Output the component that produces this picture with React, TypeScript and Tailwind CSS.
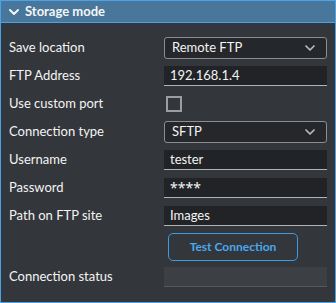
import { ChevronDown } from "lucide-react";

const font = { fontFamily: 'Lato, "Noto Sans", sans-serif' };

function Label({ children }: { children: string }) {
  return <span className="text-[13px] text-[#f4f4f4]">{children}</span>;
}

function Select({ value }: { value: string }) {
  return (
    <div className="flex h-[22px] items-center justify-between rounded-[3px] border border-[#8a8d91] bg-[#25272b] pl-[7px] pr-[8px] text-[13px] text-[#f4f4f4]">
      <span>{value}</span>
      <ChevronDown className="size-4 text-[#b9bcc0]" strokeWidth={2.5} />
    </div>
  );
}

function Input({ value, className = "" }: { value: string; className?: string }) {
  return (
    <div
      className={`flex h-[20px] items-center border-b border-[#b0b3b7] bg-[#212327] pl-[6px] text-[13px] text-[#f4f4f4] ${className}`}
    >
      {value}
    </div>
  );
}

export default function App() {
  return (
    <div
      className="flex h-[303px] w-[336px] flex-col border border-[#4aa3e6] bg-[#33363b]"
      style={font}
    >
      <div className="flex h-[22px] items-center gap-[3px] border-b border-[#4aa3e6] bg-[#48779b] pl-[5px] text-[13px] font-bold text-[#f4f6f8]">
        <ChevronDown className="size-4" strokeWidth={3} />
        Storage mode
      </div>
      <div className="grid grid-cols-[155px_163px] grid-rows-[repeat(7,22px)_28px_20px] items-center gap-y-[6px] pl-[8px] pt-[14px]">
        <Label>Save location</Label>
        <Select value="Remote FTP" />
        <Label>FTP Address</Label>
        <Input value="192.168.1.4" />
        <Label>Use custom port</Label>
        <div className="flex h-[20px] items-center">
          <div className="ml-[2px] size-[16px] border-2 border-[#9a9da1]" />
        </div>
        <Label>Connection type</Label>
        <Select value="SFTP" />
        <Label>Username</Label>
        <Input value="tester" />
        <Label>Password</Label>
        <Input value="****" className="font-['Noto_Sans'] text-[14px]" />
        <Label>Path on FTP site</Label>
        <Input value="Images" />
        <span />
        <div className="pl-[4px]">
          <button className="h-[28px] w-[130px] rounded-[5px] border border-[#3d9be0] text-[12px] font-bold text-[#4aa8ee]">
            Test Connection
          </button>
        </div>
        <Label>Connection status</Label>
        <div className="h-[20px] border-b border-[#55585c] bg-[#3c3f44]" />
      </div>
    </div>
  );
}
